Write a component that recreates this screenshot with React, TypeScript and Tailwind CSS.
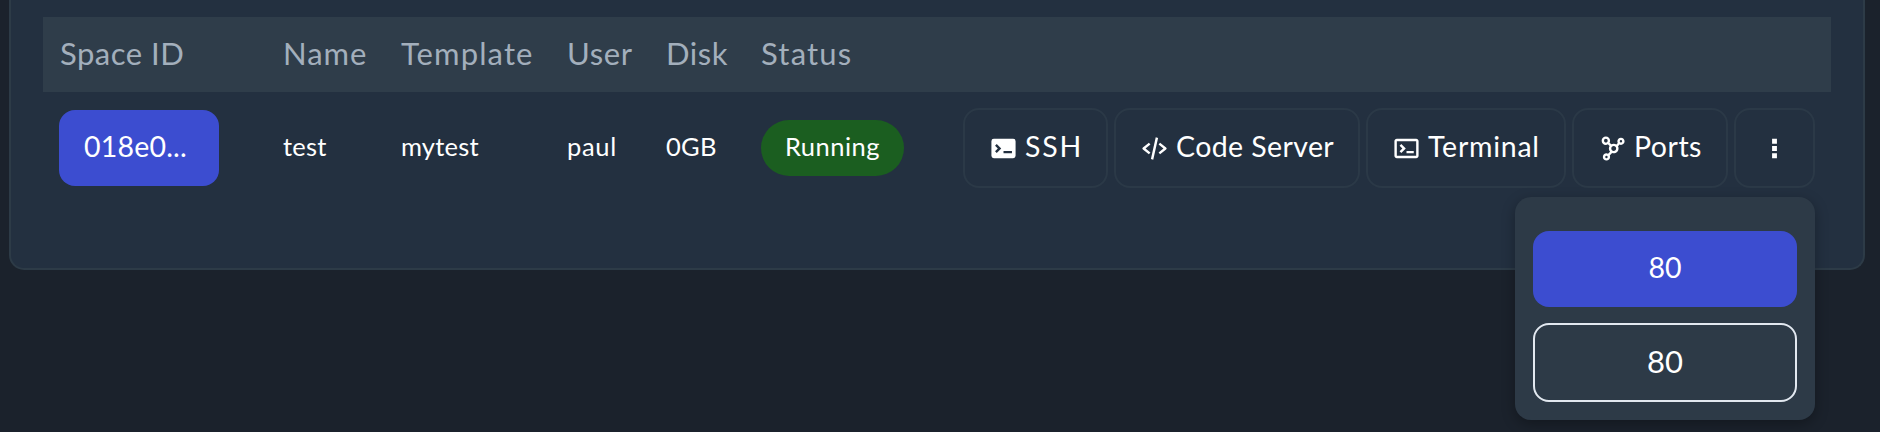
import type { ReactNode } from "react";
import {
  BiCodeAlt,
  BiDotsVertical,
  BiNetworkChart,
  BiSolidTerminal,
  BiTerminal,
} from "react-icons/bi";

const columns = [
  { label: "Space ID", className: "w-[223px] tracking-[0.5px]" },
  { label: "Name", className: "w-[118px] tracking-[1px]" },
  { label: "Template", className: "w-[166px] tracking-[1.1px]" },
  { label: "User", className: "w-[99px] tracking-[0.6px]" },
  { label: "Disk", className: "w-[95px] tracking-[0.5px]" },
  { label: "Status", className: "tracking-[1.2px]" },
];

const cells = [
  { label: "test", className: "w-[118px] tracking-[0.2px]" },
  { label: "mytest", className: "w-[166px] tracking-[0.2px]" },
  { label: "paul", className: "w-[99px] tracking-[0.7px]" },
  { label: "0GB", className: "w-[95px] tracking-[0.3px]" },
];

type ActionProps = {
  icon: ReactNode;
  label?: string;
  className: string;
};

function Action({ icon, label, className }: ActionProps) {
  return (
    <button
      className={`flex h-20 shrink-0 items-center rounded-[16px] border-2 border-[#2b3947] pl-6 text-[28.5px] leading-none ${className}`}
    >
      <span className="text-[29px]">{icon}</span>
      {label && <span className="ml-[7px] whitespace-nowrap pb-[3px]">{label}</span>}
    </button>
  );
}

export default function App() {
  return (
    <div className="relative h-[432px] w-[1880px] overflow-hidden bg-[#1b222c] font-['Lato',sans-serif] text-white">
      <section className="ml-[9px] h-[270px] w-[1856px] rounded-b-[15px] border-2 border-t-0 border-[#2d3b47] bg-[#233040] px-8 pt-[17px]">
        <div className="flex h-[75px] items-center bg-[#2f3d4a] pb-[2px] pl-[17px] text-[31px] text-[#a3afbc]">
          {columns.map((c) => (
            <div key={c.label} className={`shrink-0 whitespace-nowrap ${c.className}`}>
              {c.label}
            </div>
          ))}
        </div>
        <div className="flex h-[112px] items-center pl-4 text-[25.5px]">
          <div className="w-[224px] shrink-0">
            <button className="flex h-[76px] w-[160px] items-center rounded-[16px] bg-[#3c4dd0] pb-[3px] pl-[25px] text-[28.5px] tracking-[0.2px]">
              018e0...
            </button>
          </div>
          {cells.map((c) => (
            <div key={c.label} className={`shrink-0 whitespace-nowrap pb-[3px] ${c.className}`}>
              {c.label}
            </div>
          ))}
          <div className="flex h-14 w-[143px] shrink-0 items-center justify-center rounded-full bg-[#1b5e20] pb-[3px] tracking-[0.5px]">
            Running
          </div>
          <div className="ml-[59px] flex gap-[6px]">
            <Action icon={<BiSolidTerminal />} label="SSH" className="w-[145px] tracking-[1.8px]" />
            <Action icon={<BiCodeAlt />} label="Code Server" className="w-[246px] tracking-[0.4px]" />
            <Action icon={<BiTerminal />} label="Terminal" className="w-[200px] tracking-[0.75px]" />
            <Action icon={<BiNetworkChart />} label="Ports" className="w-[156px] tracking-[0.5px]" />
            <Action icon={<BiDotsVertical />} className="w-[81px]" />
          </div>
        </div>
      </section>
      <div className="absolute left-[1515px] top-[197px] flex h-[223px] w-[300px] flex-col gap-4 rounded-[16px] bg-[#2d3a47] px-[18px] pt-[34px] shadow-[0_4px_14px_rgba(0,0,0,0.3)]">
        <button className="h-[76px] rounded-[16px] bg-[#3c4dd0] pb-[3px] text-[28.5px]">80</button>
        <button className="h-[79px] rounded-[16px] border-2 border-[#e2e8f0] pb-[3px] text-[31px]">80</button>
      </div>
    </div>
  );
}
